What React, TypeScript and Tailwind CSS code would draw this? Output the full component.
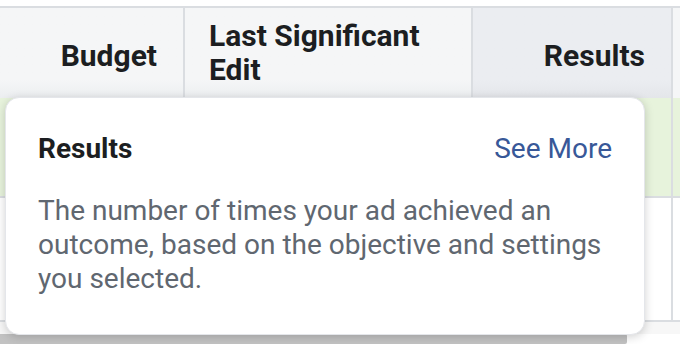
const font = { fontFamily: 'Roboto, "Noto Sans", Arial, sans-serif' };

export default function App() {
  return (
    <div className="relative h-[344px] w-[680px] overflow-hidden bg-white" style={font}>
      {/* table behind the popover */}
      <div className="pt-[6px]">
        <div className="border-t-2 border-[#dadde1]">
          {/* header row */}
          <div className="flex h-[90px] text-[30px] font-bold leading-[34px] text-[#1c1e21]">
            <div className="flex w-[185px] shrink-0 items-center justify-end border-r-2 border-[#dadde1] bg-gradient-to-b from-[#f5f6f7] from-80% to-[#eceef0] pr-[26px] pt-[6px]">
              Budget
            </div>
            <div className="flex w-[288px] shrink-0 items-center border-r-2 border-[#dadde1] bg-gradient-to-b from-[#f5f6f7] from-80% to-[#eceef0] pl-[24px]">
              Last Significant
              <br />
              Edit
            </div>
            <div className="flex w-[200px] shrink-0 items-center justify-end border-r-2 border-[#dadde1] bg-gradient-to-b from-[#ebedf1] from-80% to-[#e4e6ea] pr-[26px] pt-[6px]">
              Results
            </div>
            <div className="flex-1 bg-[#f5f6f7]" />
          </div>
          {/* green row */}
          <div className="flex h-[100px] border-b-2 border-[#dadde1] bg-[#e7f3dc]">
            <div className="w-[185px] shrink-0 border-r-2 border-[#dadde1]" />
            <div className="w-[288px] shrink-0 border-r-2 border-[#dadde1]" />
            <div className="w-[200px] shrink-0 border-r-2 border-[#dadde1]" />
            <div className="flex-1" />
          </div>
          {/* white row */}
          <div className="flex h-[124px] border-b-2 border-[#dadde1] bg-white">
            <div className="w-[185px] shrink-0 border-r-2 border-[#dadde1]" />
            <div className="w-[288px] shrink-0 border-r-2 border-[#dadde1]" />
            <div className="w-[200px] shrink-0 border-r-2 border-[#dadde1]" />
            <div className="flex-1" />
          </div>
          <div className="h-[12px] bg-[#f7f7f7]" />
          {/* horizontal scrollbar */}
          <div className="h-[10px] w-[627px] rounded-r-[2px] bg-[#c2c2c2]" />
        </div>
      </div>

      {/* popover */}
      <div className="absolute left-[5px] top-[97px] h-[238px] w-[640px] rounded-[14px] border border-[#e4e6ea] bg-white px-8 pt-[34px] shadow-[0_2px_10px_rgba(0,0,0,0.18)]">
        <div className="flex items-center justify-between">
          <span className="text-[28px] font-bold leading-[34px] text-[#1c1e21]">Results</span>
          <span className="text-[28px] leading-[34px] text-[#385898]">See More</span>
        </div>
        <p className="mt-[28px] text-[28px] leading-[34px] text-[#606770]">
          The number of times your ad achieved an outcome, based on the objective and settings you selected.
        </p>
      </div>
    </div>
  );
}
